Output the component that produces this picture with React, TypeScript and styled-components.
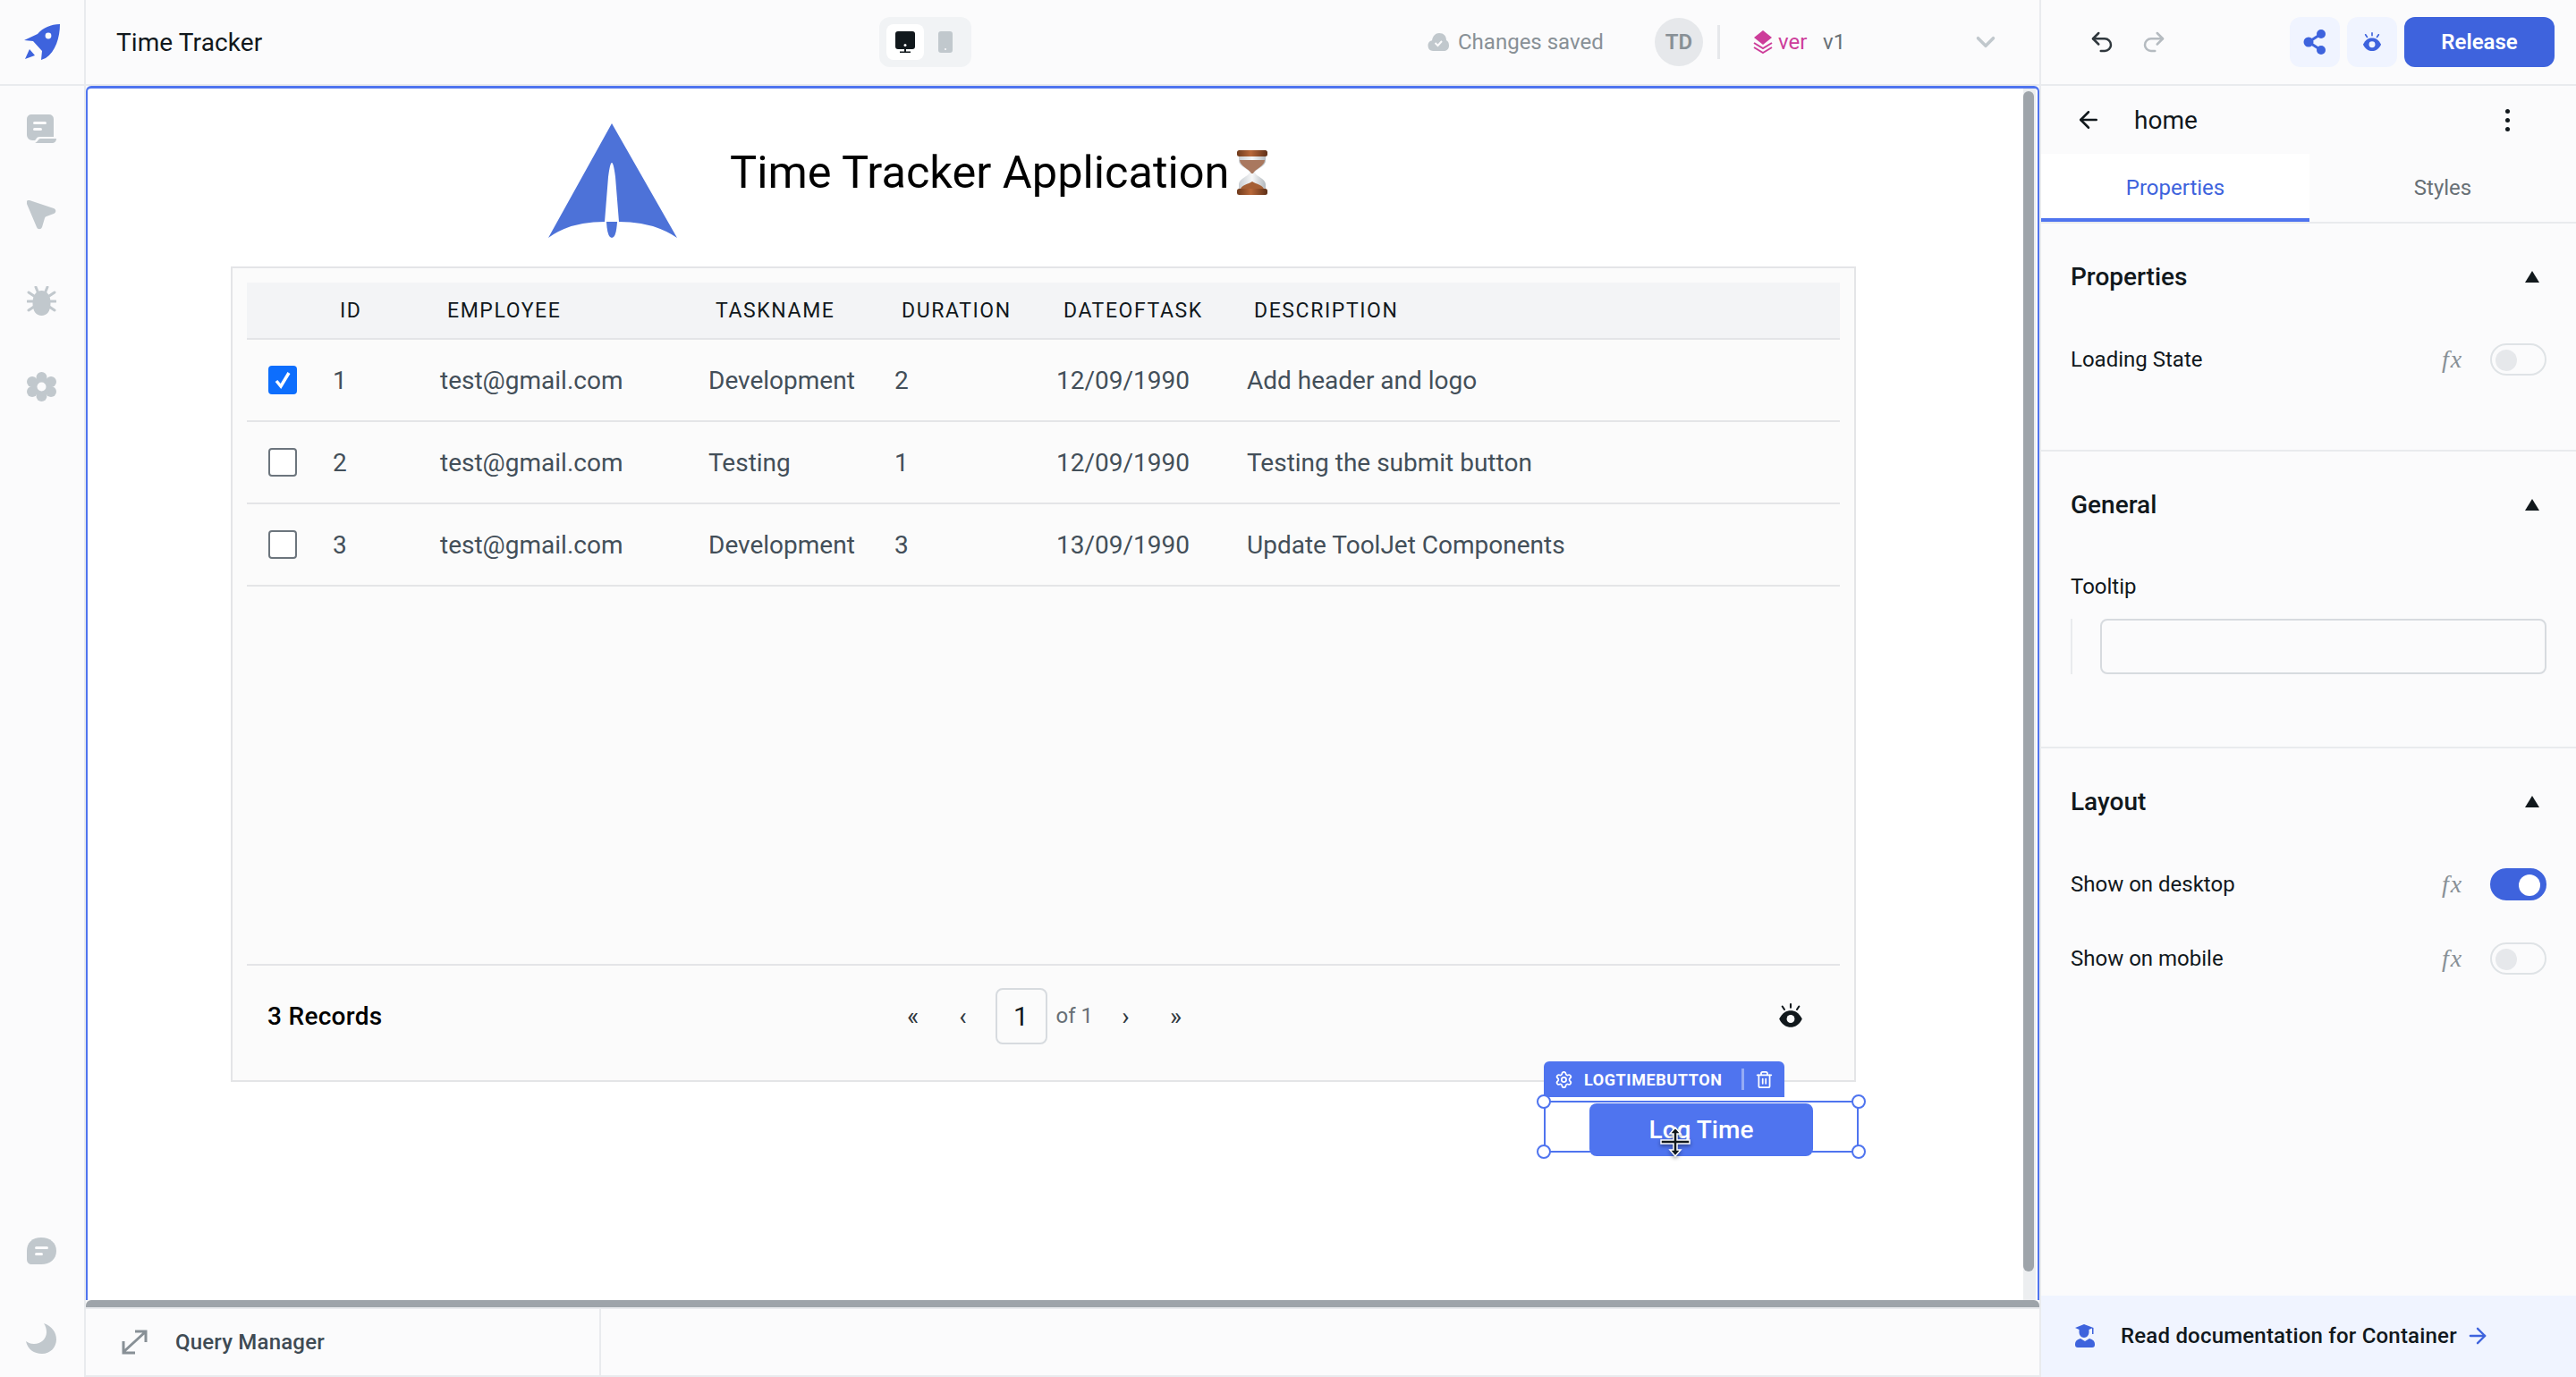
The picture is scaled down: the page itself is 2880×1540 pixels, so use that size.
import React from 'react';
import styled, {createGlobalStyle} from 'styled-components';
import {ArrowLeft, ArrowRight, ChevronDown, Redo2, Settings, Trash2, Undo2} from 'lucide-react';

const FONT = `Roboto, "Liberation Sans", sans-serif`;
const ROW_COLUMNS = '88px 120px 300px 208px 181px 213px 1fr';

const GlobalStyle = createGlobalStyle`
    html, body {
        margin: 0;
        padding: 0;
        background: #fbfbfc;
        font-family: ${FONT};
        color: #11181c;
    }
    * {
        box-sizing: border-box;
    }
`;

/* drawn icons */

const RocketIcon = () => (
    <svg width="40" height="40" viewBox="0 0 40 40">
        <path fill="#3e63dd" d="M40 0C30 0 21 4 15 11L0 18l10 1 10 11 -1 10 5-2C35 31 40 15 40 0Z"/>
        <path fill="#3e63dd" d="M1 39l5-11 6 7Z"/>
        <circle cx="27" cy="13" r="3.4" fill="#fbfbfc"/>
    </svg>
);

const PagesIcon = () => (
    <svg width="33" height="33" viewBox="0 0 33 33">
        <path fill="#c1c8cd" d="M5 0h20a5 5 0 0 1 5 5v20H14c-2 0-3 1-4 3l-1 1H6a6 6 0 0 1-6-6V5a5 5 0 0 1 5-5Z"/>
        <path fill="#c1c8cd" d="M15 27h18c0 3-2 5-5 5H9c3-1 4-5 6-5Z"/>
        <rect x="7" y="8" width="15" height="3" rx="1.5" fill="#fbfbfc"/>
        <rect x="7" y="15" width="10" height="3" rx="1.5" fill="#fbfbfc"/>
    </svg>
);

const InspectIcon = () => (
    <svg width="33" height="33" viewBox="0 0 33 33">
        <path fill="#c1c8cd" d="M3 0 30 9c3 1 3 5 0 6l-8 3c-1 .4-1.7 1-2 2l-3 10c-1 3-5 3-6 0L0 4c-1-3 1-5 3-4Z"/>
    </svg>
);

const BugIcon = () => (
    <svg width="33" height="33" viewBox="0 0 33 33">
        <g stroke="#c1c8cd" strokeWidth="3" strokeLinecap="round" fill="none">
            <path d="M10 1l2 5M23 1l-2 5M2 7l6 4M31 7l-6 4M1 17h6M32 17h-6M2 27l6-4M31 27l-6-4"/>
        </g>
        <path fill="#c1c8cd" d="M16.500 5c6 0 10 5 10 14 0 9-4 14-10 14s-10-5-10-14c0-9 4-14 10-14Z"/>
    </svg>
);

const GearIcon = () => (
    <svg width="33" height="33" viewBox="0 0 33 33">
        <g fill="#c1c8cd">
            <circle cx="16.500" cy="6" r="6"/>
            <circle cx="16.500" cy="27" r="6"/>
            <circle cx="6" cy="11" r="6"/>
            <circle cx="27" cy="11" r="6"/>
            <circle cx="6" cy="22" r="6"/>
            <circle cx="27" cy="22" r="6"/>
            <circle cx="16.500" cy="16.500" r="10"/>
        </g>
        <circle cx="16.500" cy="16.500" r="5" fill="#fbfbfc"/>
    </svg>
);

const ChatIcon = () => (
    <svg width="33" height="30" viewBox="0 0 33 30">
        <path fill="#c1c8cd" d="M16 0c10 0 17 6 17 15s-7 15-17 15H6c-4 0-6-2-6-6V15C0 6 6 0 16 0Z"/>
        <rect x="9" y="10" width="15" height="3" rx="1.500" fill="#fbfbfc"/>
        <rect x="9" y="17" width="9" height="3" rx="1.500" fill="#fbfbfc"/>
    </svg>
);

const MoonIcon = () => (
    <svg width="34" height="34" viewBox="0 0 34 34">
        <path fill="#c1c8cd" d="M20 0c9 3 14 10 14 18 0 9-7 16-16 16C9 34 2 29 0 20c3 2 5 3 9 3 8 0 14-6 14-13 0-4-1-7-3-10Z"/>
    </svg>
);

const MonitorIcon = () => (
    <svg width="22" height="24" viewBox="0 0 22 24">
        <path fill="#11181c" d="M3 0h16a3 3 0 0 1 3 3v14a3 3 0 0 1-3 3H3a3 3 0 0 1-3-3V3a3 3 0 0 1 3-3Z"/>
        <rect x="10" y="20" width="2" height="3" fill="#11181c"/>
        <rect x="5" y="22.500" width="12" height="1.500" fill="#11181c"/>
        <circle cx="11" cy="15.500" r="1.500" fill="#fbfbfc"/>
    </svg>
);

const PhoneIcon = () => (
    <svg width="16" height="24" viewBox="0 0 16 24">
        <rect width="16" height="24" rx="3" fill="#c1c8cd"/>
        <circle cx="8" cy="20" r="1" fill="#fbfbfc"/>
    </svg>
);

const CloudCheckIcon = () => (
    <svg width="24" height="22" viewBox="0 0 24 22">
        <path fill="#c1c8cd" d="M6 21a6 6 0 0 1-1-11.800C6 4 9 1 13 1c5 0 8 3 8 8 2 1 3 3 3 6 0 4-3 6-6 6Z"/>
        <path d="M8.500 12l3 3 4.500-5" fill="none" stroke="#fbfbfc" strokeWidth="2"/>
    </svg>
);

const VersionIcon = () => (
    <svg width="24" height="26" viewBox="0 0 24 26">
        <path fill="#cd3d9a" d="M12 0l10 8-10 8L2 8Z"/>
        <path d="M2 14l10 6 10-6M2 19l10 6 10-6" fill="none" stroke="#cd3d9a" strokeWidth="2"/>
    </svg>
);

const ShareIcon = () => (
    <svg width="26" height="28" viewBox="0 0 26 28">
        <path d="M20 5 6 14l14 9" fill="none" stroke="#3e63dd" strokeWidth="3"/>
        <circle cx="20" cy="5" r="5" fill="#3e63dd"/>
        <circle cx="6" cy="14" r="5.500" fill="#3e63dd"/>
        <circle cx="20" cy="23" r="5" fill="#3e63dd"/>
    </svg>
);

const EyeIcon = ({color, hole, size}: {color: string; hole: string; size: number}) => (
    <svg width={size} height={size} viewBox="0 0 24 24">
        <path d="M12 1v3M4 3l2 3M20 3l-2 3" stroke={color} strokeWidth="1.800" strokeLinecap="round"/>
        <path fill={color} d="M1 15C4 9 8 7 12 7s8 2 11 8c-3 6-7 8-11 8s-8-2-11-8Z"/>
        <circle cx="12" cy="15" r="3.800" fill={hole}/>
    </svg>
);

const ExpandIcon = () => (
    <svg width="30" height="28" viewBox="0 0 30 28">
        <path d="M3 25 27 3M16 2h12v12M3 13v13h13" fill="none" stroke="#889096" strokeWidth="3"/>
    </svg>
);

const GraduateIcon = () => (
    <svg width="22" height="26" viewBox="0 0 22 26">
        <path fill="#3e63dd" d="M10 0 0 4l4.500 2V9c0 3 2.500 6 5.500 6s5.500-3 5.500-6V6L19 4.500V11h1.500V4Z"/>
        <path fill="#3e63dd" d="M6 16c-4 1-6 3-6 6v1a3 3 0 0 0 3 3h16a3 3 0 0 0 3-3v-1c0-3-2-5-6-6l-5 3Z"/>
    </svg>
);

const AppLogo = () => (
    <svg width="144" height="128" viewBox="0 0 144 128">
        <path fill="#4d72d8" d="M71 0 144 128Q118 110 79 110L75 60Q73 44 71 44 69 44 67 60L63 110Q24 110 0 128Z"/>
        <path fill="#4d72d8" d="M65 110H77Q76 128 71 128 66 128 65 110Z"/>
    </svg>
);

const Hourglass = () => (
    <svg width="40" height="50" viewBox="0 0 40 50">
        <defs>
            <linearGradient id="hourglassWood" x1="0" x2="1" y1="0" y2="0">
                <stop offset="0" stopColor="#6e3a1c"/>
                <stop offset="0.45" stopColor="#b8683a"/>
                <stop offset="1" stopColor="#5f3017"/>
            </linearGradient>
            <linearGradient id="hourglassGlass" x1="0" x2="1" y1="0" y2="0">
                <stop offset="0" stopColor="#c9ced3"/>
                <stop offset="0.5" stopColor="#f6f7f8"/>
                <stop offset="1" stopColor="#b4babf"/>
            </linearGradient>
        </defs>
        <path fill="url(#hourglassGlass)" d="M5 6h30v6c0 6-11 9-12 13 1 4 12 7 12 13v6H5v-6c0-6 11-9 12-13-1-4-12-7-12-13Z"/>
        <path fill="#a9785f" d="M6 11h28c0 7-11 10-13 15h-2C17 21 6 18 6 11Z"/>
        <path fill="#a55f35" d="M7 44c0-5 9-6 13-9 4 3 13 4 13 9Z"/>
        <rect x="3" width="34" height="7" rx="2.500" fill="url(#hourglassWood)"/>
        <rect x="3" y="43" width="34" height="7" rx="2.500" fill="url(#hourglassWood)"/>
    </svg>
);

const MoveCursor = () => (
    <svg width="34" height="34" viewBox="0 0 34 34">
        <path d="M17 1l6 7h-4v7h14v4H19v7h4l-6 7-6-7h4v-7H1v-4h14V8h-4Z" fill="#11181c" stroke="#fff" strokeWidth="1.500"/>
    </svg>
);

const CheckMark = () => (
    <svg width="32" height="32" viewBox="0 0 32 32">
        <path d="M9 17l5 6 9-15" fill="none" stroke="#fff" strokeWidth="3.500"/>
    </svg>
);

/* data */

const tasks = [
    {id: 1, employee: 'test@gmail.com', task: 'Development', duration: 2, date: '12/09/1990', description: 'Add header and logo', checked: true},
    {id: 2, employee: 'test@gmail.com', task: 'Testing', duration: 1, date: '12/09/1990', description: 'Testing the submit button', checked: false},
    {id: 3, employee: 'test@gmail.com', task: 'Development', duration: 3, date: '13/09/1990', description: 'Update ToolJet Components', checked: false},
];

const columns = ['', 'ID', 'EMPLOYEE', 'TASKNAME', 'DURATION', 'DATEOFTASK', 'DESCRIPTION'];

export default function App() {
    return (
        <>
            <GlobalStyle/>
            <Page>
                <TopBar>
                    <Brand><RocketIcon/></Brand>
                    <EditorBar>
                        <AppName>Time Tracker</AppName>
                        <DeviceSwitch>
                            <DeviceButton $active><MonitorIcon/></DeviceButton>
                            <DeviceButton><PhoneIcon/></DeviceButton>
                        </DeviceSwitch>
                        <StatusGroup>
                            <SaveState><CloudCheckIcon/><span>Changes saved</span></SaveState>
                            <Avatar>TD</Avatar>
                            <BarDivider/>
                            <VersionIcon/>
                            <VersionLabel>ver</VersionLabel>
                            <VersionValue>v1</VersionValue>
                            <ChevronDown size={34} color="#c1c8cd" strokeWidth={2.5}/>
                        </StatusGroup>
                    </EditorBar>
                    <ActionBar>
                        <Undo2 size={30} color="#30383e" strokeWidth={2}/>
                        <Redo2 size={30} color="#b5bbc0" strokeWidth={2}/>
                        <Actions>
                            <SoftButton><ShareIcon/></SoftButton>
                            <SoftButton><EyeIcon color="#3e63dd" hole="#f0f4ff" size={22}/></SoftButton>
                            <ReleaseButton>Release</ReleaseButton>
                        </Actions>
                    </ActionBar>
                </TopBar>

                <Workspace>
                    <Rail>
                        <RailGroup>
                            <PagesIcon/>
                            <InspectIcon/>
                            <BugIcon/>
                            <GearIcon/>
                        </RailGroup>
                        <RailFoot>
                            <ChatIcon/>
                            <MoonIcon/>
                        </RailFoot>
                    </Rail>

                    <Main>
                        <Canvas>
                            <LogoSlot><AppLogo/></LogoSlot>
                            <PageTitle>Time Tracker Application<Hourglass/></PageTitle>

                            <TableWidget>
                                <HeaderRow>
                                    {columns.map((column, index) => <HeaderCell key={index}>{column}</HeaderCell>)}
                                </HeaderRow>
                                <TableBody>
                                    {tasks.map(task => (
                                        <DataRow key={task.id}>
                                            <CheckCell>
                                                <CheckBox $checked={task.checked}>{task.checked && <CheckMark/>}</CheckBox>
                                            </CheckCell>
                                            <DataCell>{task.id}</DataCell>
                                            <DataCell>{task.employee}</DataCell>
                                            <DataCell>{task.task}</DataCell>
                                            <DataCell>{task.duration}</DataCell>
                                            <DataCell>{task.date}</DataCell>
                                            <DataCell>{task.description}</DataCell>
                                        </DataRow>
                                    ))}
                                </TableBody>
                                <TableFooter>
                                    <RecordCount>3 Records</RecordCount>
                                    <Pager>
                                        <PageArrow>«</PageArrow>
                                        <PageArrow>‹</PageArrow>
                                        <PageInput>1</PageInput>
                                        <PageTotal>of 1</PageTotal>
                                        <PageArrow>›</PageArrow>
                                        <PageArrow>»</PageArrow>
                                    </Pager>
                                    <FooterEye><EyeIcon color="#11181c" hole="#fbfbfb" size={28}/></FooterEye>
                                </TableFooter>
                            </TableWidget>

                            <SelectedWidget>
                                <WidgetBadge>
                                    <Settings size={21} color="#fff" strokeWidth={2}/>
                                    <BadgeName>LOGTIMEBUTTON</BadgeName>
                                    <BadgeDivider/>
                                    <Trash2 size={21} color="#fff" strokeWidth={2}/>
                                </WidgetBadge>
                                <Handle $x="left" $y="top"/>
                                <Handle $x="right" $y="top"/>
                                <Handle $x="left" $y="bottom"/>
                                <Handle $x="right" $y="bottom"/>
                                <LogTimeButton>Log Time</LogTimeButton>
                                <CursorSlot><MoveCursor/></CursorSlot>
                            </SelectedWidget>

                            <ScrollTrack><ScrollThumb/></ScrollTrack>
                        </Canvas>
                        <HorizontalThumb/>
                        <QueryBar>
                            <QueryToggle>
                                <ExpandIcon/>
                                <QueryLabel>Query Manager</QueryLabel>
                            </QueryToggle>
                        </QueryBar>
                    </Main>

                    <Inspector>
                        <PageRow>
                            <ArrowLeft size={30} color="#11181c" strokeWidth={2}/>
                            <PageName>home</PageName>
                            <MenuDots><i/><i/><i/></MenuDots>
                        </PageRow>
                        <Tabs>
                            <Tab $active>Properties</Tab>
                            <Tab>Styles</Tab>
                        </Tabs>

                        <Section $height={255}>
                            <SectionHead>
                                <SectionTitle>Properties</SectionTitle>
                                <Caret/>
                            </SectionHead>
                            <SettingRow>
                                <SettingLabel>Loading State</SettingLabel>
                                <FxMark>fx</FxMark>
                                <Toggle/>
                            </SettingRow>
                        </Section>

                        <Section $height={332}>
                            <SectionHead>
                                <SectionTitle>General</SectionTitle>
                                <Caret/>
                            </SectionHead>
                            <SettingLabel>Tooltip</SettingLabel>
                            <TooltipField>
                                <FieldGutter/>
                                <FieldInput/>
                            </TooltipField>
                        </Section>

                        <Section $last>
                            <SectionHead>
                                <SectionTitle>Layout</SectionTitle>
                                <Caret/>
                            </SectionHead>
                            <SettingRows>
                                <SettingRow>
                                    <SettingLabel>Show on desktop</SettingLabel>
                                    <FxMark>fx</FxMark>
                                    <Toggle $on/>
                                </SettingRow>
                                <SettingRow>
                                    <SettingLabel>Show on mobile</SettingLabel>
                                    <FxMark>fx</FxMark>
                                    <Toggle/>
                                </SettingRow>
                            </SettingRows>
                        </Section>

                        <DocLink>
                            <GraduateIcon/>
                            <DocText>Read documentation for Container</DocText>
                            <ArrowRight size={28} color="#3e63dd" strokeWidth={2}/>
                        </DocLink>
                    </Inspector>
                </Workspace>
            </Page>
        </>
    );
}

const Page = styled.div`
    width: 2880px;
    height: 1540px;
    display: flex;
    flex-direction: column;
    overflow: hidden;
    background: #fbfbfc;
`;

const TopBar = styled.header`
    height: 96px;
    flex: none;
    display: flex;
    border-bottom: 2px solid #e9ebee;
`;

const Brand = styled.div`
    width: 96px;
    flex: none;
    display: flex;
    align-items: center;
    padding-left: 27px;
    border-right: 2px solid #e9ebee;
`;

const EditorBar = styled.div`
    width: 2184px;
    flex: none;
    display: grid;
    grid-template-columns: 887px 103px 1fr;
    align-items: center;
`;

const AppName = styled.div`
    padding-left: 34px;
    font-size: 28px;
    letter-spacing: 0.1px;
    color: #11181c;
`;

const DeviceSwitch = styled.div`
    height: 56px;
    display: flex;
    align-items: center;
    gap: 4px;
    padding: 0 8px;
    background: #f1f3f5;
    border-radius: 12px;
`;

const DeviceButton = styled.div<{$active?: boolean}>`
    width: 43px;
    height: 40px;
    display: flex;
    align-items: center;
    justify-content: center;
    border-radius: 8px;
    background: ${p => (p.$active ? '#fff' : 'transparent')};
`;

const StatusGroup = styled.div`
    display: flex;
    align-items: center;
    padding-left: 510px;
    color: #889096;
`;

const SaveState = styled.div`
    width: 254px;
    display: flex;
    align-items: center;
    gap: 10px;
    font-size: 24px;
`;

const Avatar = styled.div`
    width: 54px;
    height: 54px;
    flex: none;
    display: flex;
    align-items: center;
    justify-content: center;
    border-radius: 50%;
    background: #e6e8eb;
    font-size: 24px;
    font-weight: 600;
`;

const BarDivider = styled.div`
    width: 3px;
    height: 38px;
    margin: 0 36px 0 16px;
    background: #e6e8eb;
`;

const VersionLabel = styled.span`
    width: 50px;
    margin-left: 5px;
    font-size: 24px;
    color: #cd3d9a;
`;

const VersionValue = styled.span`
    width: 165px;
    font-size: 24px;
    color: #687076;
`;

const ActionBar = styled.div`
    flex: 1;
    display: flex;
    align-items: center;
    gap: 28px;
    padding: 0 24px 0 53px;
    border-left: 2px solid #e9ebee;
`;

const Actions = styled.div`
    margin-left: auto;
    display: flex;
    gap: 8px;
`;

const SoftButton = styled.button`
    width: 56px;
    height: 56px;
    display: flex;
    align-items: center;
    justify-content: center;
    padding: 0;
    border: 0;
    border-radius: 12px;
    background: #f0f4ff;
`;

const ReleaseButton = styled.button`
    width: 168px;
    height: 56px;
    border: 0;
    border-radius: 12px;
    background: #3e63dd;
    color: #fff;
    font-family: ${FONT};
    font-size: 24px;
    font-weight: 600;
`;

const Workspace = styled.div`
    flex: 1;
    display: flex;
    min-height: 0;
`;

const Rail = styled.nav`
    width: 96px;
    flex: none;
    display: flex;
    flex-direction: column;
    align-items: center;
    justify-content: space-between;
    padding: 32px 2px 26px 0;
    border-right: 2px solid #e9ebee;
`;

const RailGroup = styled.div`
    display: flex;
    flex-direction: column;
    gap: 63px;
`;

const RailFoot = styled.div`
    display: flex;
    flex-direction: column;
    align-items: center;
    gap: 66px;
`;

const Main = styled.main`
    width: 2184px;
    flex: none;
    display: flex;
    flex-direction: column;
`;

const Canvas = styled.section`
    position: relative;
    flex: 1;
    background: #fff;
    border: solid #4f74ef;
    border-width: 3px 2px 0 2px;
    border-radius: 6px 6px 0 0;
`;

const LogoSlot = styled.div`
    position: absolute;
    left: 515px;
    top: 39px;
    line-height: 0;
`;

const PageTitle = styled.h1`
    position: absolute;
    left: 718px;
    top: 64px;
    margin: 0;
    display: flex;
    align-items: center;
    gap: 6px;
    font-size: 50.500px;
    font-weight: 400;
    color: #000;
    white-space: nowrap;
`;

const TableWidget = styled.div`
    position: absolute;
    left: 160px;
    top: 199px;
    width: 1817px;
    height: 912px;
    display: flex;
    flex-direction: column;
    padding: 16px 16px 16px;
    border: 2px solid #e4e5e7;
    background: #fbfbfb;
`;

const HeaderRow = styled.div`
    height: 64px;
    flex: none;
    display: grid;
    grid-template-columns: ${ROW_COLUMNS};
    align-items: center;
    background: #f3f4f6;
    border-bottom: 2px solid #e4e5e7;
`;

const HeaderCell = styled.div`
    padding-left: 16px;
    font-size: 23px;
    letter-spacing: 1.600px;
    color: #11181c;
    white-space: nowrap;
`;

const TableBody = styled.div`
    flex: 1;
`;

const DataRow = styled.div`
    height: 92px;
    display: grid;
    grid-template-columns: ${ROW_COLUMNS};
    align-items: center;
    border-bottom: 2px solid #e4e5e7;
`;

const CheckCell = styled.div`
    padding-left: 24px;
    display: flex;
`;

const CheckBox = styled.span<{$checked?: boolean}>`
    width: 32px;
    height: 32px;
    display: block;
    border-radius: 4px;
    background: ${p => (p.$checked ? '#0d6efd' : '#fff')};
    border: ${p => (p.$checked ? '0' : '2px solid #6c757d')};
`;

const DataCell = styled.div`
    padding-left: 8px;
    font-size: 28px;
    color: #434f59;
    white-space: nowrap;
`;

const TableFooter = styled.div`
    height: 114px;
    flex: none;
    display: grid;
    grid-template-columns: 1fr auto 1fr;
    align-items: center;
    padding: 0 41px 0 23px;
    border-top: 2px solid #e4e5e7;
`;

const RecordCount = styled.div`
    font-size: 28px;
    font-weight: 500;
    letter-spacing: 0.300px;
    color: #000;
`;

const Pager = styled.div`
    display: flex;
    align-items: center;
    gap: 16px;
    margin-left: 20px;
`;

const PageArrow = styled.span`
    width: 40px;
    text-align: center;
    font-size: 28px;
    color: #30383e;
`;

const PageInput = styled.div`
    width: 58px;
    height: 63px;
    display: flex;
    align-items: center;
    justify-content: center;
    border: 2px solid #d7dbdf;
    border-radius: 8px;
    font-size: 30px;
    color: #11181c;
`;

const PageTotal = styled.span`
    width: 42px;
    margin-left: -6px;
    font-size: 24px;
    color: #687076;
`;

const FooterEye = styled.div`
    justify-self: end;
    line-height: 0;
`;

const SelectedWidget = styled.div`
    position: absolute;
    left: 1628px;
    top: 1132px;
    width: 352px;
    height: 58px;
    display: flex;
    justify-content: center;
    border: 2px solid #4f74ef;
`;

const WidgetBadge = styled.div`
    position: absolute;
    left: -2px;
    top: -46px;
    width: 269px;
    height: 40px;
    display: flex;
    align-items: center;
    padding: 0 12px;
    background: #4f74ef;
    border-radius: 6px 6px 0 0;
`;

const BadgeName = styled.span`
    width: 177px;
    margin-left: 12px;
    font-size: 18px;
    font-weight: 700;
    letter-spacing: 0.600px;
    color: #fff;
`;

const BadgeDivider = styled.span`
    width: 3px;
    height: 24px;
    margin: 0 12px 0 0;
    background: rgba(255, 255, 255, 0.4);
`;

const Handle = styled.span<{$x: 'left' | 'right'; $y: 'top' | 'bottom'}>`
    position: absolute;
    ${p => p.$x}: -10px;
    ${p => p.$y}: -9px;
    width: 16px;
    height: 16px;
    border: 2px solid #4f74ef;
    border-radius: 50%;
    background: #fff;
    z-index: 2;
`;

const LogTimeButton = styled.button`
    width: 250px;
    height: 59px;
    margin-top: 1px;
    border: 0;
    border-radius: 8px;
    background: #4f74ef;
    color: #fff;
    font-family: ${FONT};
    font-size: 28px;
    font-weight: 500;
`;

const CursorSlot = styled.div`
    position: absolute;
    left: 128px;
    top: 27px;
    line-height: 0;
    filter: drop-shadow(0 2px 2px rgba(0, 0, 0, 0.4));
`;

const ScrollTrack = styled.div`
    position: absolute;
    right: 2px;
    top: 0;
    bottom: 0;
    width: 14px;
    padding-top: 3px;
    background: #eceef0;
`;

const ScrollThumb = styled.div`
    width: 12px;
    height: 1320px;
    border-radius: 6px;
    background: #9ea4aa;
`;

const HorizontalThumb = styled.div`
    height: 8px;
    flex: none;
    border-radius: 6px 6px 0 0;
    background: #9ea4aa;
`;

const QueryBar = styled.div`
    height: 78px;
    flex: none;
    display: flex;
    border-top: 2px solid #e9ebee;
    border-bottom: 2px solid #e9ebee;
`;

const QueryToggle = styled.div`
    width: 576px;
    display: flex;
    align-items: center;
    gap: 31px;
    padding-left: 39px;
    border-right: 2px solid #e9ebee;
`;

const QueryLabel = styled.span`
    font-size: 24px;
    font-weight: 500;
    letter-spacing: 0.200px;
    color: #3f4b54;
`;

const Inspector = styled.aside`
    flex: 1;
    display: flex;
    flex-direction: column;
    min-width: 0;
    border-left: 2px solid #e9ebee;
`;

const PageRow = styled.div`
    height: 76px;
    flex: none;
    display: flex;
    align-items: center;
    padding: 0 40px 0 38px;
    gap: 36px;
`;

const PageName = styled.span`
    flex: 1;
    font-size: 28px;
    color: #11181c;
`;

const MenuDots = styled.div`
    display: flex;
    flex-direction: column;
    gap: 5px;
    margin-right: 34px;

    i {
        width: 5px;
        height: 5px;
        border-radius: 50%;
        background: #11181c;
    }
`;

const Tabs = styled.div`
    height: 78px;
    flex: none;
    display: grid;
    grid-template-columns: 300px 1fr;
    border-bottom: 2px solid #e9ebee;
`;

const Tab = styled.div<{$active?: boolean}>`
    display: flex;
    align-items: center;
    justify-content: center;
    font-size: 24px;
    background: ${p => (p.$active ? '#fff' : 'transparent')};
    color: ${p => (p.$active ? '#3e63dd' : '#687076')};
    box-shadow: ${p => (p.$active ? 'inset 0 -4px 0 #4f74ef' : 'none')};
`;

const Section = styled.section<{$height?: number; $last?: boolean}>`
    height: ${p => (p.$height ? `${p.$height}px` : 'auto')};
    flex: none;
    padding: 39px 33px 0;
    border-bottom: ${p => (p.$last ? '0' : '2px solid #e9ebee')};
`;

const SectionHead = styled.div`
    height: 40px;
    display: flex;
    align-items: center;
    justify-content: space-between;
    margin-bottom: 55px;
    padding-right: 8px;
`;

const SectionTitle = styled.h3`
    margin: 0;
    font-size: 28px;
    font-weight: 500;
    color: #11181c;
`;

const Caret = styled.span`
    width: 0;
    height: 0;
    border-left: 8px solid transparent;
    border-right: 8px solid transparent;
    border-bottom: 13px solid #11181c;
`;

const SettingRows = styled.div`
    display: flex;
    flex-direction: column;
    gap: 47px;
`;

const SettingRow = styled.div`
    height: 36px;
    display: flex;
    align-items: center;
`;

const SettingLabel = styled.span`
    display: block;
    flex: 1;
    font-size: 24px;
    line-height: 34px;
    color: #11181c;
`;

const FxMark = styled.span`
    width: 54px;
    font-family: "Liberation Serif", serif;
    font-style: italic;
    font-size: 28px;
    color: #889096;
    letter-spacing: 2px;
`;

const Toggle = styled.span<{$on?: boolean}>`
    position: relative;
    width: 63px;
    height: 36px;
    flex: none;
    border-radius: 18px;
    border: 2px solid ${p => (p.$on ? '#3e63dd' : '#dfe3e6')};
    background: ${p => (p.$on ? '#3e63dd' : 'transparent')};

    &::after {
        content: '';
        position: absolute;
        top: 5px;
        ${p => (p.$on ? 'right: 5px;' : 'left: 4px;')}
        width: 24px;
        height: 24px;
        border-radius: 50%;
        background: ${p => (p.$on ? '#fff' : '#e6e8eb')};
    }
`;

const TooltipField = styled.div`
    display: flex;
    gap: 31px;
    margin-top: 19px;
`;

const FieldGutter = styled.div`
    width: 2px;
    background: #e9ebee;
`;

const FieldInput = styled.div`
    flex: 1;
    height: 62px;
    border: 2px solid #d7dbdf;
    border-radius: 8px;
`;

const DocLink = styled.div`
    height: 91px;
    flex: none;
    margin-top: auto;
    display: flex;
    align-items: center;
    padding: 0 0 2px 38px;
    background: #f0f4ff;
`;

const DocText = styled.span`
    margin: 0 9px 0 29px;
    font-size: 24px;
    font-weight: 500;
    letter-spacing: 0.200px;
    color: #11181c;
`;
